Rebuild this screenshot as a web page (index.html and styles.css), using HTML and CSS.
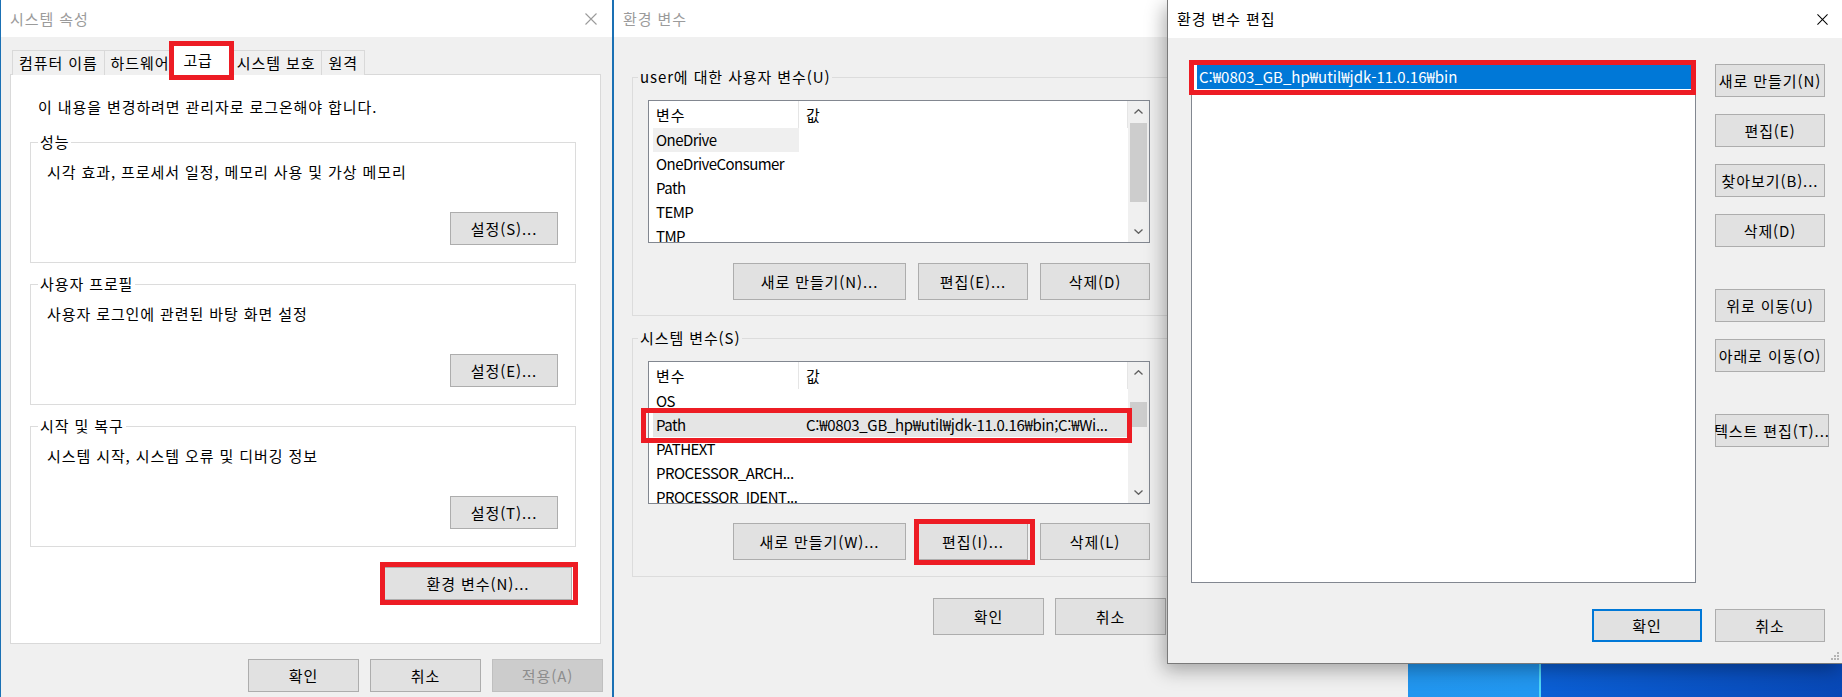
FILE: index.html
```html
<!DOCTYPE html>
<html lang="ko">
<head>
<meta charset="utf-8">
<title>환경 변수 편집</title>
<link rel="stylesheet" href="styles.css">
</head>
<body>
<main class="desktop">

  <section class="win win-sys">
    <header class="titlebar">
      <span class="title title-inactive">시스템 속성</span>
      <svg class="close-icon close-inactive" viewBox="0 0 12 12"><path d="M0.5 0.5 L11.5 11.5 M11.5 0.5 L0.5 11.5"/></svg>
    </header>
    <div class="sys-body">
      <nav class="tabs">
        <span class="tab">컴퓨터 이름</span>
        <span class="tab">하드웨어</span>
        <span class="tab tab-active">고급</span>
        <span class="tab">시스템 보호</span>
        <span class="tab">원격</span>
      </nav>
      <div class="tab-panel">
        <p class="note">이 내용을 변경하려면 관리자로 로그온해야 합니다.</p>
        <div class="group sys-group">
          <span class="group-title">성능</span>
          <p class="group-desc">시각 효과, 프로세서 일정, 메모리 사용 및 가상 메모리</p>
          <div class="group-actions"><button class="btn btn-setting">설정(S)...</button></div>
        </div>
        <div class="group sys-group">
          <span class="group-title">사용자 프로필</span>
          <p class="group-desc">사용자 로그인에 관련된 바탕 화면 설정</p>
          <div class="group-actions"><button class="btn btn-setting">설정(E)...</button></div>
        </div>
        <div class="group sys-group">
          <span class="group-title">시작 및 복구</span>
          <p class="group-desc">시스템 시작, 시스템 오류 및 디버깅 정보</p>
          <div class="group-actions"><button class="btn btn-setting">설정(T)...</button></div>
        </div>
        <div class="env-action"><button class="btn btn-env">환경 변수(N)...</button></div>
      </div>
      <div class="dialog-actions sys-actions">
        <button class="btn btn-dialog">확인</button>
        <button class="btn btn-dialog">취소</button>
        <button class="btn btn-dialog btn-disabled">적용(A)</button>
      </div>
    </div>
  </section>

  <section class="win win-env">
    <header class="titlebar">
      <span class="title title-inactive">환경 변수</span>
    </header>
    <div class="env-body">
      <div class="group env-group">
        <span class="group-title">user에 대한 사용자 변수(U)</span>
        <div class="listview">
          <div class="lv-main">
            <div class="lv-head"><span class="col1">변수</span><span class="col2">값</span></div>
            <div class="lv-row row-focus"><span class="col1">OneDrive</span><span class="col2"></span></div>
            <div class="lv-row"><span class="col1">OneDriveConsumer</span><span class="col2"></span></div>
            <div class="lv-row"><span class="col1">Path</span><span class="col2"></span></div>
            <div class="lv-row"><span class="col1">TEMP</span><span class="col2"></span></div>
            <div class="lv-row"><span class="col1">TMP</span><span class="col2"></span></div>
          </div>
          <div class="scrollbar">
            <div class="sb-btn"><svg viewBox="0 0 9 5"><polyline points="0.5,4.5 4.5,0.7 8.5,4.5"/></svg></div>
            <div class="sb-track"><div class="sb-thumb thumb-user"></div></div>
            <div class="sb-btn"><svg viewBox="0 0 9 5"><polyline points="0.5,0.5 4.5,4.3 8.5,0.5"/></svg></div>
          </div>
        </div>
        <div class="env-buttons">
          <button class="btn btn-wide">새로 만들기(N)...</button>
          <button class="btn btn-mid">편집(E)...</button>
          <button class="btn btn-mid">삭제(D)</button>
        </div>
      </div>

      <div class="group env-group">
        <span class="group-title">시스템 변수(S)</span>
        <div class="listview">
          <div class="lv-main">
            <div class="lv-head"><span class="col1">변수</span><span class="col2">값</span></div>
            <div class="lv-row"><span class="col1">OS</span><span class="col2"></span></div>
            <div class="lv-row row-selected"><span class="col1">Path</span><span class="col2">C:₩0803_GB_hp₩util₩jdk-11.0.16₩bin;C:₩Wi...</span></div>
            <div class="lv-row"><span class="col1">PATHEXT</span><span class="col2"></span></div>
            <div class="lv-row"><span class="col1">PROCESSOR_ARCH...</span><span class="col2"></span></div>
            <div class="lv-row"><span class="col1">PROCESSOR_IDENT...</span><span class="col2"></span></div>
          </div>
          <div class="scrollbar">
            <div class="sb-btn"><svg viewBox="0 0 9 5"><polyline points="0.5,4.5 4.5,0.7 8.5,4.5"/></svg></div>
            <div class="sb-track"><div class="sb-thumb thumb-sys"></div></div>
            <div class="sb-btn"><svg viewBox="0 0 9 5"><polyline points="0.5,0.5 4.5,4.3 8.5,0.5"/></svg></div>
          </div>
        </div>
        <div class="env-buttons">
          <button class="btn btn-wide">새로 만들기(W)...</button>
          <button class="btn btn-mid">편집(I)...</button>
          <button class="btn btn-mid">삭제(L)</button>
        </div>
      </div>

      <div class="dialog-actions env-actions">
        <button class="btn btn-env-dialog">확인</button>
        <button class="btn btn-env-dialog">취소</button>
      </div>
    </div>
  </section>

  <section class="win win-edit">
    <header class="titlebar">
      <span class="title">환경 변수 편집</span>
      <svg class="close-icon close-active" viewBox="0 0 12 12"><path d="M0.5 0.5 L11.5 11.5 M11.5 0.5 L0.5 11.5"/></svg>
    </header>
    <div class="edit-body">
      <div class="edit-list">
        <div class="edit-item"><span>C:₩0803_GB_hp₩util₩jdk-11.0.16₩bin</span></div>
      </div>
      <div class="edit-side">
        <button class="btn side-btn">새로 만들기(N)</button>
        <button class="btn side-btn">편집(E)</button>
        <button class="btn side-btn">찾아보기(B)...</button>
        <button class="btn side-btn">삭제(D)</button>
        <button class="btn side-btn side-gap">위로 이동(U)</button>
        <button class="btn side-btn">아래로 이동(O)</button>
        <button class="btn side-btn side-gap side-text">텍스트 편집(T)...</button>
      </div>
      <div class="dialog-actions edit-actions">
        <button class="btn btn-edit-dialog btn-default">확인</button>
        <button class="btn btn-edit-dialog">취소</button>
      </div>
    </div>
    <svg class="grip" viewBox="0 0 9 9"><rect x="6" y="0" width="2" height="2"/><rect x="3" y="3" width="2" height="2"/><rect x="6" y="3" width="2" height="2"/><rect x="0" y="6" width="2" height="2"/><rect x="3" y="6" width="2" height="2"/><rect x="6" y="6" width="2" height="2"/></svg>
  </section>

  <div class="mark mark-tab"></div>
  <div class="mark mark-env"></div>
  <div class="mark mark-path"></div>
  <div class="mark mark-edit"></div>
  <div class="mark mark-item"></div>
</main>
</body>
</html>
```

FILE: styles.css
```css
* { box-sizing: border-box; }
html, body { margin: 0; padding: 0; }
body {
  width: 1842px;
  height: 697px;
  overflow: hidden;
  font-family: "Noto Sans CJK KR", "Noto Sans", sans-serif;
  font-size: 15px;
  line-height: 20px;
  letter-spacing: 0.9px;
  color: #000;
  background: linear-gradient(90deg, #1b8ae4 0px, #2297f0 1539px, #4fd8f6 1539px, #4fd8f6 1541px, #0b5fd4 1541px, #0848b6 1842px);
}
p { margin: 0; }

.desktop { position: relative; width: 1842px; height: 697px; }

/* windows */
.win { position: absolute; top: 0; background: #f0f0f0; display: flex; flex-direction: column; }
.win-sys { left: 0; width: 613px; height: 697px; border-left: 1px solid #1a70b4; border-right: 1px solid #1a70b4; }
.win-env { left: 613px; width: 795px; height: 697px; border-left: 1px solid #1a70b4; }
.win-edit {
  left: 1167px; width: 675px; height: 664px;
  border-left: 1px solid #7a7a7a; border-bottom: 1px solid #7a7a7a;
  box-shadow: -3px 6px 18px rgba(0, 0, 0, 0.32);
  z-index: 1;
}

.titlebar {
  flex: none; height: 37px; background: #fff;
  display: flex; align-items: center; justify-content: space-between;
  padding: 0 15px 0 9px;
}
.win-edit .titlebar { height: 38px; padding: 0 14px 0 9px; }
.title { white-space: nowrap; }
.title-inactive { color: #9b9b9b; }
.close-icon { width: 12px; height: 12px; fill: none; stroke-width: 1.1; }
.close-inactive { stroke: #9b9b9b; }
.close-active { stroke: #000; width: 11px; height: 11px; }

/* buttons */
.btn {
  font: inherit; letter-spacing: inherit; color: #000; background: #e1e1e1; border: 1px solid #adadad;
  padding: 0; margin: 0; display: inline-flex; align-items: center; justify-content: center;
  white-space: nowrap;
}
.btn-disabled { background: #cccccc; border-color: #bfbfbf; color: #8d8d8d; }
.btn-default { border: 2px solid #0078d7; }
.dialog-actions { display: flex; justify-content: flex-end; }

/* system properties */
.sys-body { padding: 8px 11px 0 9px; }
.tabs { position: relative; z-index: 2; display: flex; align-items: flex-end; height: 30px; padding-left: 2px; }
.tab {
  height: 25px; padding: 0 6px; border: 1px solid #d9d9d9; border-bottom: 0;
  background: #f0f0f0; line-height: 23px; margin-right: -1px; white-space: nowrap;
}
.tab-active { height: 30px; background: #fff; margin: 0 -1px 0 -3px; padding: 0 17px 0 10px; line-height: 28px; }
.tab-panel {
  height: 570px; margin-top: -1px; background: #fff; border: 1px solid #d9d9d9;
  padding: 22px 24px 0 19px; display: flex; flex-direction: column;
}
.note { padding-left: 8px; }
.group { position: relative; border: 1px solid #dcdcdc; }
.group-title { position: absolute; top: -11px; padding: 0 2px; white-space: nowrap; }
.sys-group { margin-top: 21px; padding: 19px 17px 17px 16px; }
.note + .sys-group { margin-top: 25px; }
.sys-group .group-title { left: 7px; background: #fff; }
.group-actions { display: flex; justify-content: flex-end; margin-top: 30px; }
.btn-setting { width: 108px; height: 33px; }
.env-action { display: flex; justify-content: flex-end; margin-top: 20px; padding-right: 4px; }
.btn-env { width: 188px; height: 33px; }
.sys-actions { margin-top: 15px; margin-right: -2px; gap: 11px; }
.btn-dialog { width: 111px; height: 33px; }

/* environment variables */
.env-body { padding: 40px 0 0 18px; }
.env-group { width: 536px; padding: 22px 17px 15px 15px; }
.env-group + .env-group { margin-top: 22px; padding-bottom: 16px; }
.env-group .group-title { left: 5px; background: #f0f0f0; }
.listview { height: 143px; border: 1px solid #828790; background: #fff; display: flex; }
.lv-main { flex: 1; overflow: hidden; }
.lv-head { display: flex; height: 27px; line-height: 27px; }
.lv-head .col1 { width: 150px; padding-left: 7px; border-right: 1px solid #e5e5e5; }
.lv-head .col2 { flex: 1; padding-left: 7px; border-right: 1px solid #e5e5e5; }
.lv-row { display: flex; height: 24px; line-height: 24px; margin: 0 1px 0 4px; white-space: nowrap; letter-spacing: -0.3px; }
.lv-row .col1 { width: 146px; padding-left: 3px; overflow: hidden; letter-spacing: -0.55px; }
.lv-row .col2 { flex: 1; padding-left: 7px; overflow: hidden; }
.row-focus .col1 { background: #efefef; }
.row-selected { background: #e5e5e5; }

.scrollbar { flex: none; width: 21px; background: #f0f0f0; display: flex; flex-direction: column; }
.sb-btn { flex: none; height: 21px; display: flex; align-items: center; justify-content: center; }
.sb-btn svg { width: 9px; height: 5px; fill: none; stroke: #606060; stroke-width: 1.3; }
.sb-track { flex: 1; padding: 0 2px; }
.sb-thumb { background: #cdcdcd; }
.thumb-user { margin-top: 1px; height: 79px; }
.thumb-sys { margin-top: 19px; height: 25px; }

.env-buttons { display: flex; justify-content: flex-end; gap: 12px; margin-top: 20px; }
.env-group + .env-group .env-buttons { margin-top: 19px; }
.btn-wide { width: 173px; height: 37px; }
.btn-mid { width: 110px; height: 37px; }
.env-actions { width: 536px; margin-top: 21px; padding-right: 2px; gap: 11px; }
.btn-env-dialog { width: 111px; height: 37px; }

/* edit environment variable */
.edit-body { display: grid; grid-template-columns: 505px 110px; column-gap: 19px; padding: 23px 0 0 23px; }
.edit-list { height: 522px; border: 1px solid #828790; background: #fff; padding: 3px 3px 0; }
.edit-item { height: 25px; background: #fff; padding: 0 0 1px 2px; }
.edit-item span { display: block; height: 24px; line-height: 24px; padding-left: 2px; background: #0078d7; color: #fff; white-space: nowrap; letter-spacing: 0; }
.edit-side { display: flex; flex-direction: column; align-items: flex-start; padding-top: 3px; }
.side-btn { width: 110px; height: 33px; margin-top: 17px; }
.side-btn:first-child { margin-top: 0; }
.side-gap { margin-top: 42px; }
.side-text { width: 114px; }
.edit-actions { grid-column: 1 / -1; margin-top: 26px; gap: 13px; }
.btn-edit-dialog { width: 110px; height: 33px; }
.grip { position: absolute; right: 2px; bottom: 2px; width: 9px; height: 9px; fill: #b4b4b4; }

/* annotation boxes */
.mark { position: absolute; border: 5px solid #ed1c24; z-index: 5; pointer-events: none; }
.mark-tab { left: 169px; top: 41px; width: 65px; height: 39px; }
.mark-env { left: 380px; top: 562px; width: 198px; height: 43px; }
.mark-path { left: 641px; top: 408px; width: 491px; height: 35px; }
.mark-edit { left: 914px; top: 519px; width: 121px; height: 46px; }
.mark-item { left: 1189px; top: 60px; width: 507px; height: 35px; }
```
